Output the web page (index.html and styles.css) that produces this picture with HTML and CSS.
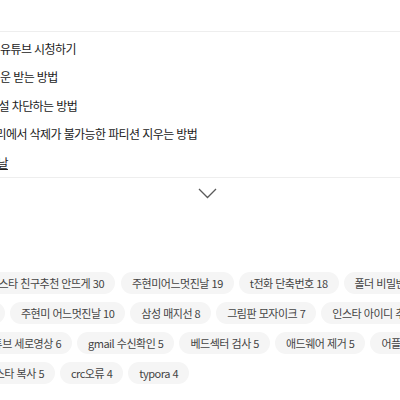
FILE: index.html
```html
<!DOCTYPE html>
<html lang="ko">
<head>
<meta charset="utf-8">
<title>관련 글</title>
<link rel="stylesheet" href="styles.css">
</head>
<body>
<div class="page">
  <div class="head"></div>
  <ul class="posts">
    <li class="post"><a class="post-link" href="#">유튜브 시청하기</a></li>
    <li class="post"><a class="post-link" href="#">운 받는 방법</a></li>
    <li class="post"><a class="post-link cut-a" href="#">설 차단하는 방법</a></li>
    <li class="post"><a class="post-link cut-b" href="#">리에서 삭제가 불가능한 파티션 지우는 방법</a></li>
    <li class="post"><a class="post-link cut-c active" href="#">날</a></li>
  </ul>
  <div class="more">
    <svg class="chev" width="20" height="12" viewBox="0 0 20 12" aria-hidden="true">
      <polyline points="1,2 9.5,10.5 18,2" fill="none" stroke="#5a5a5a" stroke-width="1.3"/>
    </svg>
  </div>
  <div class="tags">
    <div class="tag-row">
      <div class="lead lead-1"><a class="tag" href="#">인스타 친구추천 안뜨게 30</a></div>
      <a class="tag" href="#">주현미어느멋진날 19</a>
      <a class="tag" href="#">t전화 단축번호 18</a>
      <a class="tag" href="#">폴더 비밀번호 설정 6</a>
    </div>
    <div class="tag-row">
      <div class="lead lead-2"><a class="tag" href="#">크롬 광고 차단 10</a></div>
      <a class="tag" href="#">주현미 어느멋진날 10</a>
      <a class="tag" href="#">삼성 매지선 8</a>
      <a class="tag" href="#">그림판 모자이크 7</a>
      <a class="tag" href="#">인스타 아이디 추천 6</a>
    </div>
    <div class="tag-row">
      <div class="lead lead-3"><a class="tag" href="#">유튜브 세로영상 6</a></div>
      <a class="tag" href="#">gmail 수신확인 5</a>
      <a class="tag" href="#">베드섹터 검사 5</a>
      <a class="tag" href="#">애드웨어 제거 5</a>
      <a class="tag" href="#">어플 삭제 5</a>
    </div>
    <div class="tag-row">
      <div class="lead lead-4"><a class="tag" href="#">인스타 복사 5</a></div>
      <a class="tag" href="#">crc오류 4</a>
      <a class="tag" href="#">typora 4</a>
    </div>
  </div>
</div>
</body>
</html>
```
FILE: styles.css
```css
html, body {
  margin: 0;
  padding: 0;
  background: #ffffff;
}
body {
  font-family: "Noto Sans CJK KR", "Noto Sans", sans-serif;
  overflow: hidden;
  width: 400px;
  height: 400px;
}
.page {
  width: 400px;
}
.head {
  height: 31px;
}
.posts {
  list-style: none;
  margin: 0;
  padding: 2px 0 0 0;
  border-top: 1px solid #eeeeee;
  border-bottom: 1px solid #eeeeee;
}
.post {
  height: 28.5px;
  display: flex;
  align-items: center;
  white-space: nowrap;
}
.post-link {
  font-size: 12px;
  letter-spacing: -0.6px;
  color: #222222;
  text-decoration: none;
}
.post-link.cut-a { margin-left: -1.5px; }
.post-link.cut-b { margin-left: -4.5px; }
.post-link.cut-c { margin-left: -2.5px; }
.post-link.active { text-decoration: underline; }
.more {
  display: flex;
  padding-left: 198px;
  margin-top: 9px;
  height: 12px;
}
.chev {
  display: block;
}
.tags {
  margin-top: 73px;
  display: flex;
  flex-direction: column;
  gap: 8px;
}
.tag-row {
  display: flex;
  gap: 5px;
  white-space: nowrap;
}
.lead {
  display: flex;
  justify-content: flex-end;
  overflow: hidden;
  flex-shrink: 0;
}
.lead-1 { width: 115px; margin-right: 1px; }
.lead-2 { width: 5px; }
.lead-3 { width: 72px; }
.lead-4 { width: 55px; }
.tag {
  flex-shrink: 0;
  display: flex;
  align-items: center;
  height: 22px;
  padding: 0 11px;
  border-radius: 11px;
  background: #f5f5f5;
  color: #444444;
  font-size: 11px;
  letter-spacing: -0.5px;
  text-decoration: none;
}
```
